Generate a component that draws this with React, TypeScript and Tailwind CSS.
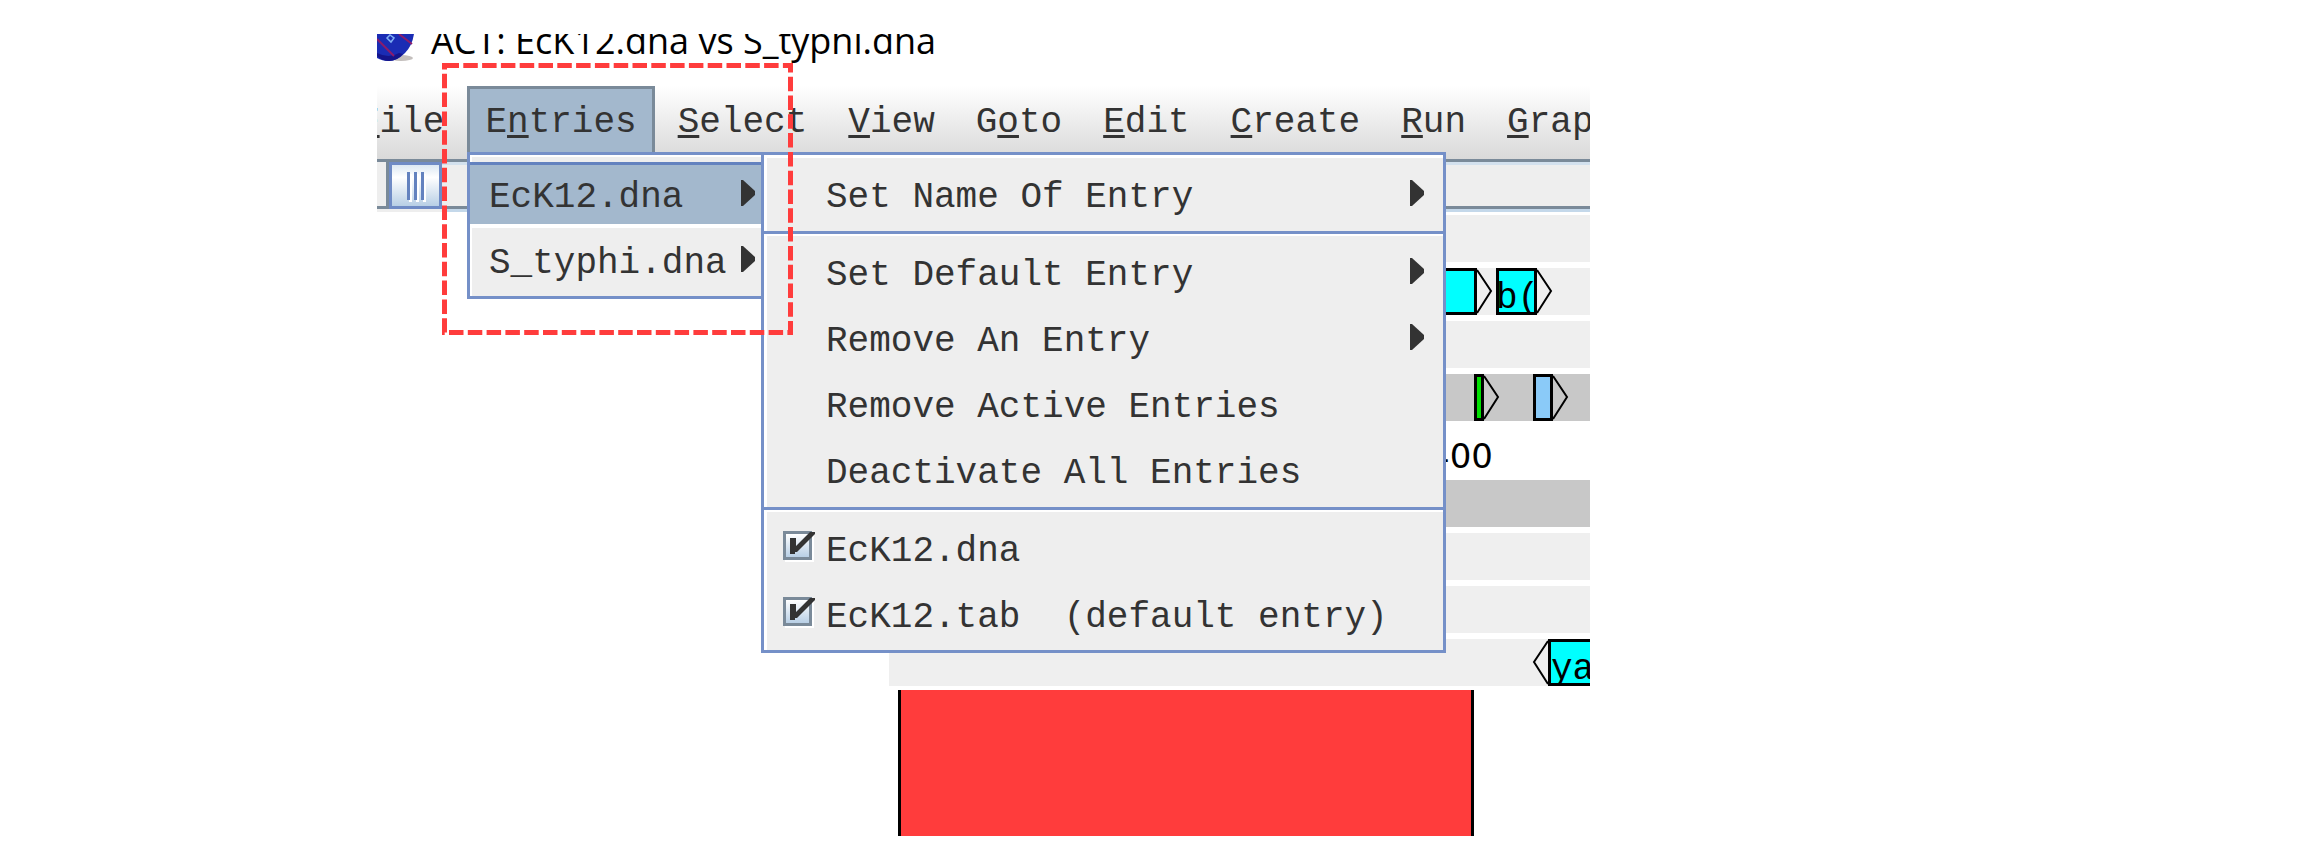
import React from "react";

const menus: { before: string; key: string; after: string; active?: boolean }[] = [
  { before: "", key: "F", after: "ile" },
  { before: "E", key: "n", after: "tries", active: true },
  { before: "", key: "S", after: "elect" },
  { before: "", key: "V", after: "iew" },
  { before: "G", key: "o", after: "to" },
  { before: "", key: "E", after: "dit" },
  { before: "", key: "C", after: "reate" },
  { before: "", key: "R", after: "un" },
  { before: "", key: "G", after: "raph" },
];

function Globe() {
  return (
    <svg className="h-7 w-[38px] shrink-0" viewBox="0 0 38 28" aria-hidden="true">
      <ellipse cx="24" cy="24" rx="12" ry="3" fill="#c4bfbd" />
      <path d="M0 0H37Q35 12 28 19Q20 27 12 27Q5 27 0 24Z" fill="#1a2cb4" />
      <path d="M0 22Q5 27 12 27Q20 27 26 20L22 19Q12 25 0 19Z" fill="#14148a" />
      <path d="M0 5L17 22M22 0L35 10" stroke="#8a1c6c" strokeWidth="2" fill="none" />
      <path d="M10 4l3-3 4 3-3 4z" fill="none" stroke="#7fb0f4" strokeWidth="1.5" />
    </svg>
  );
}

function SubmenuArrow() {
  return (
    <svg className="mb-1 h-[26px] w-[14px] shrink-0" viewBox="0 0 14 26" aria-hidden="true">
      <path d="M0 0H2L14 11V15L2 26H0Z" fill="#333" />
    </svg>
  );
}

function SubmenuItem({ label, arrow }: { label: string; arrow?: boolean }) {
  return (
    <button type="button" className="flex h-[66px] w-full items-center pr-[19px] pl-[62px] text-left">
      <span className="grow pt-[6px] leading-[58px] whitespace-pre">{label}</span>
      {arrow && <SubmenuArrow />}
    </button>
  );
}

function CheckItem({ id, label }: { id: string; label: string }) {
  return (
    <div className="flex h-[66px] items-center pl-[19px]">
      <span className="relative mb-[6px] block size-[30px] shrink-0">
        <input
          id={id}
          type="checkbox"
          defaultChecked
          className="block size-[29px] appearance-none border-[3px] border-[#7a8a99] bg-linear-to-b from-white to-[#b8cfe5] shadow-[2px_2px_0_#fff]"
        />
        <svg className="pointer-events-none absolute top-0 left-0 h-[30px] w-8" viewBox="0 0 32 30" aria-hidden="true">
          <path d="M7 7H13V15L27 1H32V3L14 21H12V23H7Z" fill="#333" />
        </svg>
      </span>
      <label htmlFor={id} className="grow pt-[6px] pl-[13px] leading-[58px] whitespace-pre">
        {label}
      </label>
    </div>
  );
}

function Divider() {
  return (
    <div className="h-3 pt-[3px]">
      <div className="h-[5px] border-t-[3px] border-[#7590c8] bg-white" />
    </div>
  );
}

function Band({ dark, children }: { dark?: boolean; children?: React.ReactNode }) {
  return <div className={dark ? "relative h-[47px] bg-[#c8c8c8]" : "relative h-[47px] bg-[#efefef]"}>{children}</div>;
}

export default function App() {
  return (
    <main className="min-h-screen overflow-hidden bg-white pt-[34px] pr-[723px] pb-[30px] pl-[377px] font-['Liberation_Mono',monospace] text-[36px] text-[#333]">
      <div className="relative">
        <header className="flex h-[52px] items-start gap-4 overflow-hidden">
          <Globe />
          <h1 className="-mt-[11px] font-['Open_Sans',sans-serif] text-[36px] leading-9 whitespace-nowrap text-black">
            ACT: EcK12.dna vs S_typhi.dna
          </h1>
        </header>

        <nav className="h-[73px] overflow-hidden bg-linear-to-b from-white to-[#d9d9d9]">
          <div className="-ml-[37px] flex gap-[5px]">
            {menus.map((m) => (
              <button
                key={m.before + m.key + m.after}
                type="button"
                className={
                  m.active
                    ? "h-[70px] shrink-0 border-[3px] border-[#7a8a99] bg-[#a3b8cd] px-[15px] pt-1 leading-[60px] whitespace-nowrap"
                    : "h-[70px] shrink-0 border-y-[3px] border-transparent px-[18px] pt-1 leading-[60px] whitespace-nowrap"
                }
              >
                {m.before}
                <span className="underline decoration-[3px] underline-offset-[3px]">{m.key}</span>
                {m.after}
              </button>
            ))}
          </div>
        </nav>

        <div className="flex h-[53px] border-t-[3px] border-[#7a8a99] bg-[#eee]">
          <div className="h-[47px] w-3 border-r-[3px] border-b-[3px] border-[#7a8a99]" />
          <div className="flex h-[47px] w-[53px] items-center justify-center gap-1 border-[3px] border-[#6f8bc5] bg-linear-to-b from-[#dce8f3] via-white via-30% to-[#b8cfe5]">
            <i className="h-7 w-[3px] bg-[#6382bf] shadow-[2px_2px_0_#fff]" />
            <i className="h-7 w-[3px] bg-[#6382bf] shadow-[2px_2px_0_#fff]" />
            <i className="h-7 w-[3px] bg-[#6382bf] shadow-[2px_2px_0_#fff]" />
          </div>
          <div className="h-[50px] grow border-y-[3px] border-t-[#d3e1ee] border-b-[#c4d8ea] bg-[#eee]">
            <div className="h-[44px] border-b-[3px] border-[#7a8a99]" />
          </div>
        </div>

        <section className="ml-[512px] flex flex-col gap-[6px] overflow-hidden pt-[3px]">
          <Band />
          <Band>
            <svg className="absolute top-0 left-[541px] h-[47px] w-[160px]" viewBox="0 0 160 47">
              <path d="M0 1.5H45.5V45.5H0Z" fill="#0ff" stroke="#000" strokeWidth="3" />
              <path d="M47 2L61 23L47 45" fill="none" stroke="#000" strokeWidth="2" />
              <path d="M67.5 1.5H105.5V45.5H67.5Z" fill="#0ff" stroke="#000" strokeWidth="3" />
              <text x="66" y="40" fontSize="36" fill="#000">b(</text>
              <path d="M107 2L121 23L107 45" fill="none" stroke="#000" strokeWidth="2" />
            </svg>
          </Band>
          <Band />
          <Band dark>
            <svg className="absolute top-0 left-[541px] h-[47px] w-[160px]" viewBox="0 0 160 47" aria-hidden="true">
              <path d="M45.5 1.5H52.5V45.5H45.5Z" fill="#00e000" stroke="#000" strokeWidth="3" />
              <path d="M54 2L68 23L54 45" fill="none" stroke="#000" strokeWidth="2" />
              <path d="M104.5 1.5H121.5V45.5H104.5Z" fill="#8acaf8" stroke="#000" strokeWidth="3" />
              <path d="M123 2L137 23L123 45" fill="none" stroke="#000" strokeWidth="2" />
            </svg>
          </Band>
          <div className="h-[47px] pl-[539px] font-['DejaVu_Sans',sans-serif] text-[34px] leading-[58px] text-black">400</div>
          <Band dark />
          <Band />
          <Band />
          <Band>
            <svg className="absolute top-0 left-[641px] h-[47px] w-[60px]" viewBox="0 0 60 47">
              <path d="M18 2L4 23L18 45" fill="none" stroke="#000" strokeWidth="2" />
              <path d="M19.5 1.5H70V45.5H19.5Z" fill="#0ff" stroke="#000" strokeWidth="3" />
              <text x="21" y="40" fontSize="36" fill="#000">ya</text>
            </svg>
          </Band>
        </section>

        <div className="mt-1 mr-[116px] ml-[521px] h-[146px] border-x-[3px] border-black bg-[#ff3c3c]" />

        {/* Entries menu */}
        <div className="absolute top-[118px] left-[90px] z-10 w-[298px] border-[3px] border-[#7590c8] bg-[#eee] pt-[7px] pb-[2px] shadow-[inset_2px_2px_0_#fff]">
          <button
            type="button"
            className="flex h-[66px] w-full items-center border-t-[3px] border-b-[4px] border-t-[#6382bf] border-b-white bg-[#a3b8cd] pr-[7px] pl-[19px] text-left"
          >
            <span className="grow pt-[6px] leading-[56px]">EcK12.dna</span>
            <SubmenuArrow />
          </button>
          <button type="button" className="flex h-[66px] w-full items-center pr-[7px] pl-[19px] text-left">
            <span className="grow pt-[6px] leading-[58px]">S_typhi.dna</span>
            <SubmenuArrow />
          </button>
        </div>

        {/* EcK12.dna submenu */}
        <div className="absolute top-[118px] left-[384px] z-10 w-[685px] border-[3px] border-[#7590c8] bg-[#eee] pt-[7px] pb-[2px] shadow-[inset_3px_3px_0_#fff]">
          <SubmenuItem label="Set Name Of Entry" arrow />
          <Divider />
          <SubmenuItem label="Set Default Entry" arrow />
          <SubmenuItem label="Remove An Entry" arrow />
          <SubmenuItem label="Remove Active Entries" />
          <SubmenuItem label="Deactivate All Entries" />
          <Divider />
          <CheckItem id="entry-dna" label="EcK12.dna" />
          <CheckItem id="entry-tab" label="EcK12.tab  (default entry)" />
        </div>

        {/* Dashed highlight around the menu */}
        <svg
          className="pointer-events-none absolute top-[29px] left-[65px] z-20 h-[272px] w-[352px]"
          viewBox="0 0 352 272"
          aria-hidden="true"
        >
          <rect x="2.5" y="2.5" width="346" height="267" fill="none" stroke="#ff3c3c" strokeWidth="5" strokeDasharray="14.5 4.3" />
        </svg>
      </div>
    </main>
  );
}
